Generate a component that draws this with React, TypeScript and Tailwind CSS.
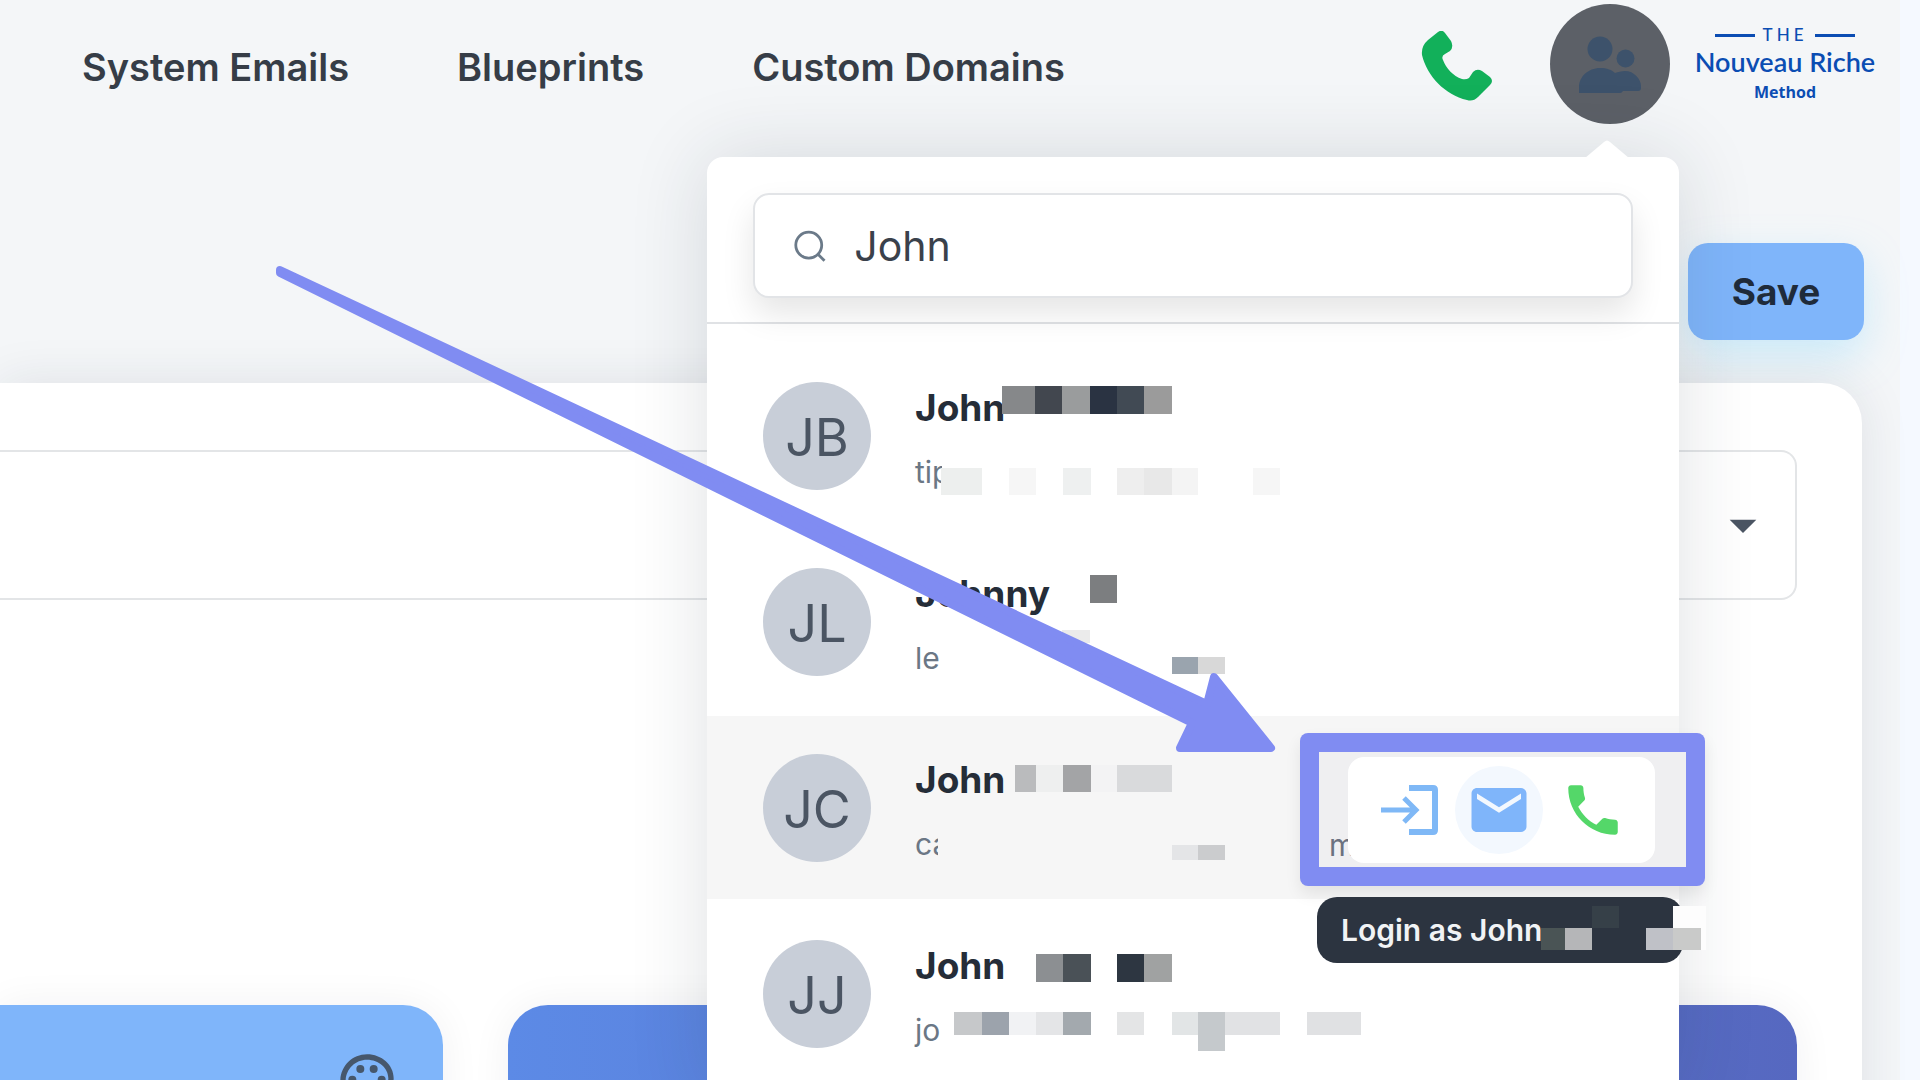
import React from "react";
import { MdOutlinePalette, MdEmail, MdPhone, MdArrowDropDown } from "react-icons/md";

type Block = [x: number, y: number, w: number, h: number, color: string];

type Contact = {
  initials: string;
  name: string;
  email: string;
  active?: boolean;
  blocks: Block[];
};

// Block coordinates are relative to the top left of the row
const contacts: Contact[] = [
  {
    initials: "JB",
    name: "John",
    email: "tip",
    blocks: [
      [295, 42, 33, 28, "#86888a"],
      [328, 42, 27, 28, "#42474f"],
      [355, 42, 28, 28, "#9a9c9d"],
      [383, 42, 27, 28, "#2a3342"],
      [410, 42, 27, 28, "#414a54"],
      [437, 42, 28, 28, "#9b9b9b"],
      [235, 112, 40, 12, "#ffffff"],
      [234, 124, 41, 27, "#edefee"],
      [302, 124, 27, 27, "#f6f6f6"],
      [356, 124, 28, 27, "#eef0f0"],
      [410, 124, 27, 27, "#eeeeee"],
      [437, 124, 28, 27, "#e8e8e8"],
      [465, 124, 26, 27, "#f4f4f4"],
      [546, 124, 27, 27, "#f6f6f6"],
    ],
  },
  {
    initials: "JL",
    name: "Johnny",
    email: "le",
    blocks: [
      [383, 45, 27, 28, "#7c7e80"],
      [355, 100, 28, 13, "#ebebeb"],
      [465, 127, 26, 17, "#9aa4ae"],
      [491, 127, 27, 17, "#d8d8d8"],
    ],
  },
  {
    initials: "JC",
    name: "John",
    email: "ca",
    active: true,
    blocks: [
      [308, 49, 21, 27, "#babbbd"],
      [329, 49, 27, 27, "#eeefef"],
      [356, 49, 28, 27, "#a3a4a6"],
      [384, 49, 26, 27, "#f3f3f4"],
      [410, 49, 55, 27, "#d9dadc"],
      [231, 105, 20, 45, "#f6f6f6"],
      [465, 129, 26, 15, "#e4e5e7"],
      [491, 129, 27, 15, "#cbccce"],
    ],
  },
  {
    initials: "JJ",
    name: "John",
    email: "jo",
    blocks: [
      [329, 52, 27, 28, "#8c8f92"],
      [356, 52, 28, 28, "#4a5157"],
      [410, 52, 27, 28, "#2d3641"],
      [437, 52, 28, 28, "#a0a2a2"],
      [247, 110, 28, 23, "#c6c8ca"],
      [275, 110, 27, 23, "#9ca3ac"],
      [302, 110, 27, 23, "#f1f2f4"],
      [329, 110, 27, 23, "#e4e5e7"],
      [356, 110, 28, 23, "#a3a9ae"],
      [410, 110, 27, 23, "#e4e5e6"],
      [465, 110, 26, 23, "#e2e5e6"],
      [491, 110, 27, 39, "#c5c9cc"],
      [518, 110, 55, 23, "#e1e2e4"],
      [600, 110, 54, 23, "#e0e1e3"],
    ],
  },
];

const tooltipBlocks: Block[] = [
  [356, 9, 33, 44, "#fdfdfd"],
  [224, 31, 24, 22, "#4a5455"],
  [248, 31, 27, 22, "#b5b6b8"],
  [275, 9, 27, 22, "#364048"],
  [329, 31, 27, 22, "#bfc1c7"],
  [356, 31, 28, 22, "#c9cac9"],
];

const navItems = ["System Emails", "Blueprints", "Custom Domains"];

function Mosaic({ blocks }: { blocks: Block[] }) {
  return (
    <svg
      className="pointer-events-none absolute inset-0 h-full w-full overflow-visible"
      shapeRendering="crispEdges"
      aria-hidden="true">
      {blocks.map(([x, y, w, h, color], index) => (
        <rect key={index} x={x} y={y} width={w} height={h} fill={color} />
      ))}
    </svg>
  );
}

function PeopleIcon() {
  return (
    <svg viewBox="0 0 62 57" className="h-[57px] w-[62px]" fill="#3d526b">
      <circle cx="21" cy="13" r="12.500" />
      <circle cx="46.500" cy="22.500" r="9" />
      <path d="M0 57v-6C0 41 9 32 21 32c7 0 12 2 15 5 3-1 6-2 10-2 9 0 16 8 16 15v2c0 2-1 3-3 3H44q-1 2-3 2z" />
    </svg>
  );
}

function LoginIcon() {
  return (
    <svg viewBox="0 0 57 50" className="h-[50px] w-[57px]" fill="none" stroke="#7fb8f6" strokeWidth="5">
      <path d="M28 3h24q2 0 2 2v40q0 2-2 2H28" strokeWidth="6" />
      <path d="M0 25h35M23 13l12 12-12 12" />
    </svg>
  );
}

function BrandLogo() {
  return (
    <a
      href="#"
      className="flex w-[182px] flex-col items-center pt-5 text-[#0b4db3]">
      <span className="flex items-center gap-2">
        <span className="h-[3px] w-10 bg-[#0b4db3]"></span>
        <span className="font-['Lato'] text-[17px] leading-[22px] font-medium tracking-[4px]">THE</span>
        <span className="h-[3px] w-10 bg-[#0b4db3]"></span>
      </span>
      <span className="font-['Lato'] text-[27px] leading-8 font-semibold whitespace-nowrap">
        Nouveau Riche
      </span>
      <span className="font-['Open_Sans'] text-[16px] leading-7 font-bold">Method</span>
    </a>
  );
}

function RowActions() {
  return (
    <>
      <div className="absolute top-[17px] left-[593px] flex h-[153px] w-[405px] items-center rounded-lg bg-[#808cf2] p-[19px] shadow-[0_8px_16px_rgba(0,0,0,0.08)]">
        <div className="flex h-full w-full items-center bg-[#efeff1] pl-[10px]">
          <span className="w-[19px] pt-[70px] text-[30px] leading-9 text-[#6b7280]">m.</span>
          <div className="relative flex h-[106px] w-[307px] items-center justify-between rounded-2xl bg-white pr-[29px] pl-[33px]">
            <button aria-label="Login">
              <LoginIcon />
            </button>
            <button
              aria-label="Email"
              className="flex h-[88px] w-[88px] items-center justify-center rounded-full bg-[#f3f8fe]">
              <MdEmail className="h-[66px] w-[66px] text-[#7fb5fa]" />
            </button>
            <button aria-label="Call">
              <MdPhone className="h-[66px] w-[66px] text-[#54d769]" />
            </button>
          </div>
        </div>
      </div>
      <div
        role="tooltip"
        className="absolute top-[181px] left-[610px] z-10 h-[66px] w-[366px] rounded-[20px] bg-[#2c3440] pl-6 text-[30px] leading-[66px] font-semibold text-[#f1f3f5]">
        Login as John
        <Mosaic blocks={tooltipBlocks} />
      </div>
    </>
  );
}

function ContactRow({ contact }: { contact: Contact }) {
  return (
    <li
      className={
        contact.active
          ? "relative flex h-[183px] items-center bg-[#f6f6f6] pl-14"
          : "relative flex h-[183px] items-center pl-14"
      }>
      <div className="flex h-[108px] w-[108px] items-center justify-center rounded-full bg-[#c8ced8] pt-1 text-[52px] text-[#4b5563]">
        {contact.initials}
      </div>
      <div className="flex flex-col gap-6 pt-1 pl-11">
        <span className="text-[37px] leading-[44px] font-bold text-[#252d38]">{contact.name}</span>
        <span className="text-[30px] leading-9 text-[#6b7785]">{contact.email}</span>
      </div>
      <Mosaic blocks={contact.blocks} />
      {contact.active && <RowActions />}
    </li>
  );
}

function AccountMenu() {
  return (
    <div className="absolute top-[153px] -right-[9px] z-20 w-[972px] rounded-2xl bg-white pb-4 shadow-[0_0_80px_rgba(30,41,59,0.14)]">
      <svg viewBox="0 0 44 18" className="absolute -top-[17px] right-[50px] h-[18px] w-11" fill="#fff">
        <path d="M0 18L19 2q3-3 6 0l19 16z" />
      </svg>
      <div className="border-b-2 border-[#e0e2e5] px-[46px] pt-9 pb-6">
        <label className="flex h-[105px] items-center gap-7 rounded-2xl border-2 border-[#e2e4e7] bg-white pl-[38px] shadow-[0_16px_32px_rgba(0,0,0,0.10)]">
          <svg viewBox="0 0 36 36" className="h-9 w-9" fill="none" stroke="#6b7a89" strokeWidth="3">
            <circle cx="17" cy="17" r="14" />
            <path d="M27 27l7 7" />
          </svg>
          <input
            type="text"
            aria-label="Search accounts"
            defaultValue="John"
            className="w-full bg-transparent pt-[2px] text-[41px] text-[#3a414b] outline-none"
          />
        </label>
      </div>
      <ul className="flex flex-col gap-[3px] pt-5">
        {contacts.map((contact) => (
          <ContactRow key={contact.initials} contact={contact} />
        ))}
      </ul>

      {/* Pointer to the row actions */}
      <svg
        className="pointer-events-none absolute top-0 left-0 h-px w-px overflow-visible"
        aria-hidden="true">
        <g transform="translate(-707 -157)" fill="#808cf2" stroke="#808cf2" strokeWidth="8" strokeLinejoin="round">
          <path d="M280 270L1207 704L1214 677L1271 748H1180L1192 723L280 273z" />
        </g>
      </svg>
    </div>
  );
}

export default function App() {
  return (
    <div className="h-screen overflow-hidden bg-[#f5f9ff] pr-5 font-['Inter',sans-serif]">
      <div className="flex h-full flex-col bg-[#f4f6f8]">
        <header className="flex items-start pt-1 pr-6">
          <nav className="flex flex-1 gap-[108px] pt-10 pl-[82px]">
            {navItems.map((item) => (
              <a
                key={item}
                href="#"
                className="text-[38px] leading-[46px] font-semibold whitespace-nowrap text-[#363d47]">
                {item}
              </a>
            ))}
          </nav>
          <button aria-label="Phone" className="mt-[27px] mr-[57px]">
            <svg viewBox="0 0 72 70" className="h-[70px] w-[72px]" fill="#12b05a">
              <path d="M17 1L7 9Q0 15 1 24C6 45 24 64 46 69Q52 71 57 66L69 54Q73 50 69 46L61 40Q56 37 52 41L48 47Q45 49 41 48C32 45 25 37 22 29Q20 25 24 23L29 20Q33 16 30 10L24 2Q21-2 17 1z" />
            </svg>
          </button>
          <div className="relative mr-6">
            <button
              aria-label="Switch account"
              className="flex h-[120px] w-[120px] items-center justify-center rounded-full bg-[#5c6067]">
              <PeopleIcon />
            </button>
            <AccountMenu />
          </div>
          <BrandLogo />
        </header>

        <div className="mt-[119px] flex justify-end pr-9">
          <button className="h-[97px] w-44 rounded-[20px] bg-[#7fb5fa] text-[37px] font-bold text-[#1f2b3a] shadow-[0_16px_40px_rgba(125,211,252,0.35)]">
            Save
          </button>
        </div>

        <main className="mt-[43px] mr-[38px] flex-1 rounded-tr-[40px] bg-white pt-[67px] pr-[65px] shadow-[0_0_50px_rgba(30,41,59,0.10)]">
          <button
            aria-label="Open options"
            className="flex h-[150px] w-full items-center justify-end rounded-r-2xl border-y-2 border-r-2 border-[#e3e5e7] pr-5">
            <MdArrowDropDown className="h-16 w-16 text-[#4b5563]" />
          </button>
          <div className="mt-[405px] flex gap-[65px]">
            <section className="flex h-60 w-[443px] justify-end rounded-tr-[40px] bg-[#7fb5fa] pt-11 pr-11 shadow-[0_0_40px_rgba(30,41,59,0.06)]">
              <MdOutlinePalette className="h-16 w-16 text-[#46576c]" />
            </section>
            <section className="h-60 flex-1 rounded-t-[40px] bg-gradient-to-r from-[#5c8ae6] to-[#5668c0] shadow-[0_0_40px_rgba(30,41,59,0.06)]"></section>
          </div>
        </main>
      </div>
    </div>
  );
}
